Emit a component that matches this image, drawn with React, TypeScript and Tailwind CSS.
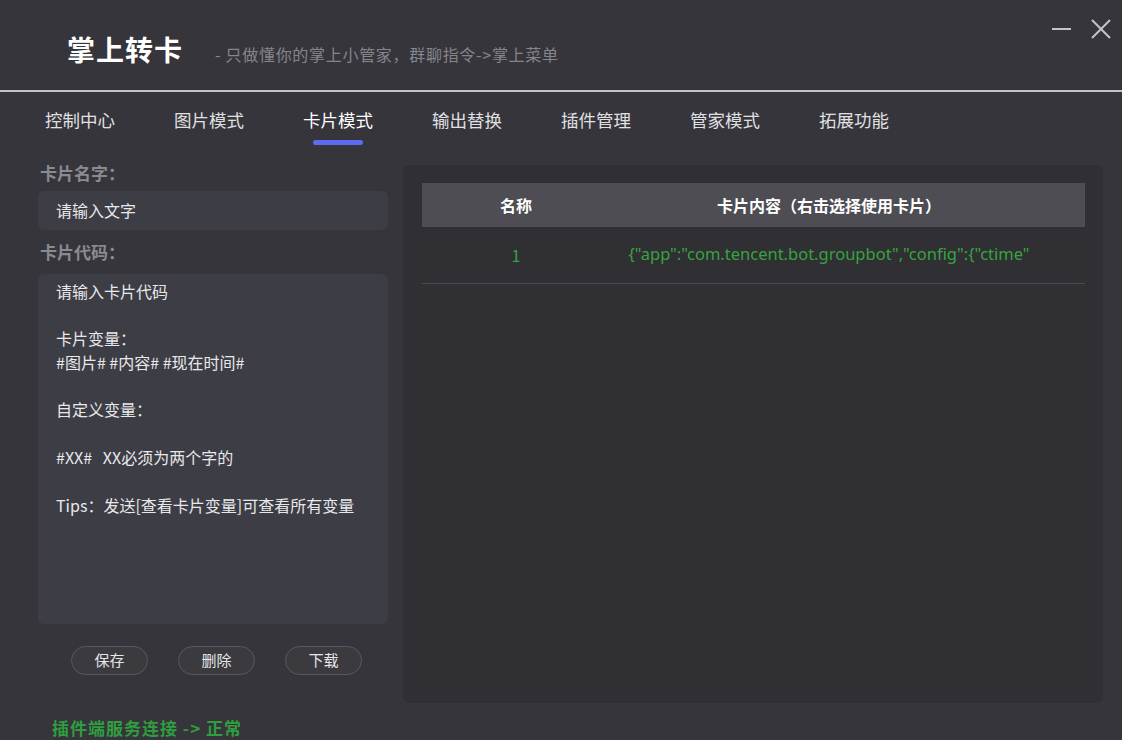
const tabs = ['控制中心', '图片模式', '卡片模式', '输出替换', '插件管理', '管家模式', '拓展功能'];

const codeLines = [
  '请输入卡片代码',
  '',
  '卡片变量：',
  '#图片# #内容# #现在时间#',
  '',
  '自定义变量：',
  '',
  '#XX#   XX必须为两个字的',
  '',
  'Tips：发送[查看卡片变量]可查看所有变量',
];

const font = { fontFamily: '"Noto Sans CJK SC", "Noto Sans", "Liberation Sans", sans-serif' };

export default function App() {
  const active = 2;

  return (
    <div style={font} className="w-[1122px] h-[740px] bg-[#36353b] flex flex-col overflow-hidden text-[#e6e6e8]">
      {/* title bar */}
      <div className="relative h-[90px] flex items-center pl-[67px] pt-[8px]">
        <h1 className="text-[28px] font-bold text-white tracking-[1px]">掌上转卡</h1>
        <span className="ml-[32px] mt-[10px] text-[16px] tracking-[0.7px] text-[#85858b]">{'- 只做懂你的掌上小管家，群聊指令->掌上菜单'}</span>
        <div className="absolute right-[10px] top-[18px] flex items-center gap-[18px]">
          <svg width="22" height="22" viewBox="0 0 22 22" className="text-[#c4c4c8]">
            <path d="M2 11 H21" stroke="currentColor" strokeWidth="2" />
          </svg>
          <svg width="22" height="22" viewBox="0 0 22 22" className="text-[#c4c4c8]">
            <path d="M2 2 L20 20 M20 2 L2 20" stroke="currentColor" strokeWidth="2" />
          </svg>
        </div>
      </div>
      <div className="h-[2px] bg-[#c2c2c6]" />

      {/* tabs */}
      <div className="flex pl-[45px] h-[63px]">
        {tabs.map((t, i) => (
          <div key={t} className="w-[129px] pt-[16px] flex flex-col items-start">
            <span className={i === active ? 'text-[17.5px] leading-[24px] text-white' : 'text-[17.5px] leading-[24px] text-[#e0e0e3]'}>{t}</span>
            {i === active && <div className="ml-[10px] mt-[8px] w-[50px] h-[5px] rounded-full bg-[#5b6cf2]" />}
          </div>
        ))}
      </div>

      {/* main */}
      <div className="flex flex-1">
        <div className="ml-[38px] w-[350px] flex flex-col">
          <div className="h-[36px] flex items-center pl-[2px] text-[17px] font-bold text-[#8a8a90]">卡片名字：</div>
          <div className="h-[39px] rounded-[6px] bg-[#3d3d45] flex items-center pl-[18px] text-[16px] text-[#e8e8ea]">请输入文字</div>
          <div className="h-[44px] flex items-center pl-[2px] text-[17px] font-bold text-[#8a8a90]">卡片代码：</div>
          <div className="h-[350px] rounded-[6px] bg-[#3d3d45] pl-[18px] pt-[6px] text-[16px] leading-[23.8px] text-[#e8e8ea]">
            {codeLines.map((l, i) => (
              <div key={i} className="h-[23.8px] whitespace-pre">{l}</div>
            ))}
          </div>
          <div className="flex gap-[30px] ml-[33px] mt-[22px]">
            {['保存', '删除', '下载'].map((b) => (
              <button key={b} className="w-[77px] h-[29px] rounded-full border border-[#58585e] bg-[#3a3a3f] text-[15px] text-[#e6e6e8]">
                {b}
              </button>
            ))}
          </div>
          <div className="mt-[40px] ml-[14px] text-[17px] font-bold tracking-[1px] text-[#2f9e3e]">{'插件端服务连接 -> 正常'}</div>
        </div>

        <div className="ml-[15px] mt-[10px] w-[700px] h-[538px] rounded-[6px] bg-[#302f34] pt-[18px] pl-[19px] pr-[18px]">
          <div className="grid grid-cols-[188px_438px_1fr] h-[44px] bg-[#4e4d53] items-center text-[16px] font-bold text-white">
            <div className="text-center">名称</div>
            <div className="text-center">卡片内容（右击选择使用卡片）</div>
            <div />
          </div>
          <div className="grid grid-cols-[188px_438px_1fr] h-[57px] items-center border-b border-[#4a494f] text-[16px] text-[#37a33f]">
            <div className="text-center">1</div>
            <div className="text-center whitespace-nowrap text-[16.5px]" style={{ fontFamily: '"Noto Sans", "Liberation Sans", sans-serif' }}>
              {'{"app":"com.tencent.bot.groupbot","config":{"ctime"'}
            </div>
            <div />
          </div>
        </div>
      </div>
    </div>
  );
}
